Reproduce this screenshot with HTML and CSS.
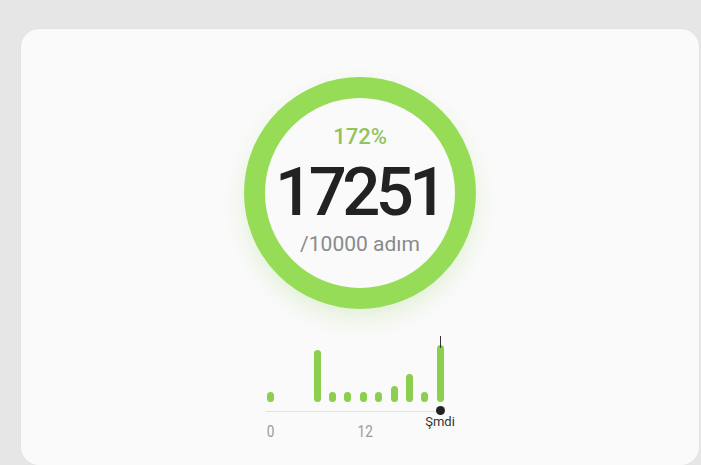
FILE: index.html
```html
<!DOCTYPE html>
<html lang="tr">
<head>
  <meta charset="UTF-8" />
  <meta name="viewport" content="width=device-width, initial-scale=1" />
  <title>Adım</title>
  <link rel="stylesheet" href="styles.css">
</head>
<body>
  <div class="card">
    <div class="ring">
      <div class="percent">172%</div>
      <div class="steps">17251</div>
      <div class="goal">/10000 adım</div>
    </div>

    <div class="chart">
      <div class="bars">
        <div class="slot"><div class="bar" style="height:10px"></div></div>
        <div class="slot"></div>
        <div class="slot"></div>
        <div class="slot"><div class="bar" style="height:52px"></div></div>
        <div class="slot"><div class="bar" style="height:10px"></div></div>
        <div class="slot"><div class="bar" style="height:10px"></div></div>
        <div class="slot"><div class="bar" style="height:10px"></div></div>
        <div class="slot"><div class="bar" style="height:10px"></div></div>
        <div class="slot"><div class="bar" style="height:16px"></div></div>
        <div class="slot"><div class="bar" style="height:28px"></div></div>
        <div class="slot"><div class="bar" style="height:10px"></div></div>
        <div class="slot now"><div class="bar" style="height:57px"></div></div>
      </div>
      <div class="axis">
        <span class="dot"></span>
        <span class="now-label">Şmdi</span>
      </div>
      <div class="labels">
        <span class="lbl first">0</span>
        <span class="lbl mid">12</span>
      </div>
    </div>
  </div>
</body>
</html>
```

FILE: styles.css
```css
body {
  margin: 0;
  padding: 29px 2px 0 21px;
  background: #e6e6e6;
  font-family: Roboto, "Noto Sans", sans-serif;
  height: 465px;
  box-sizing: border-box;
  overflow: hidden;
}

.card {
  background: #fafafa;
  border-radius: 18px;
  box-shadow: 0 0 2px rgba(0,0,0,0.06);
  height: 436px;
  padding-top: 48px;
  box-sizing: border-box;
  display: flex;
  flex-direction: column;
  align-items: center;
}

/* Halka */
.ring {
  width: 232px;
  height: 232px;
  box-sizing: border-box;
  border: 21px solid #97dc57;
  border-radius: 50%;
  box-shadow: 0 10px 22px rgba(130,200,70,0.18);
  display: flex;
  flex-direction: column;
  align-items: center;
  padding-top: 26px;
}

.percent {
  font-size: 22px;
  line-height: 26px;
  font-weight: 500;
  color: #92c35d;
}

.steps {
  margin-top: 12px;
  font-size: 67px;
  line-height: 60px;
  font-weight: 500;
  letter-spacing: -4.5px;
  color: #222;
  text-indent: -2px;
}

.goal {
  margin-top: 10px;
  font-size: 21px;
  line-height: 24px;
  color: #8a8a8a;
}

/* Grafik */
.chart {
  width: 200px;
  margin-top: 27px;
}

.bars {
  display: grid;
  grid-template-columns: repeat(12, 15.4px);
  padding-left: 3.3px;
  height: 66px;
  align-items: end;
}

.slot {
  display: flex;
  justify-content: center;
  align-items: flex-end;
  height: 66px;
  position: relative;
}

.bar {
  width: 7px;
  border-radius: 3.5px;
  background: #8ccf4e;
}

.slot.now::before {
  content: "";
  position: absolute;
  left: 50%;
  top: 0;
  width: 1px;
  height: 12px;
  background: #333;
}

.axis {
  position: relative;
  margin-top: 8.5px;
  margin-left: 6px;
  width: 174px;
  height: 1px;
  background: #e2e2e2;
}

.dot {
  position: absolute;
  right: -4.5px;
  top: -4.5px;
  width: 9px;
  height: 9px;
  border-radius: 50%;
  background: #222;
}

.now-label {
  position: absolute;
  left: 100%;
  top: 3.5px;
  transform: translateX(-50%);
  font-size: 13px;
  line-height: 15px;
  color: #333;
}

.labels {
  display: grid;
  grid-template-columns: repeat(12, 15.4px);
  padding-left: 3.3px;
  margin-top: 9.5px;
}

.lbl {
  font-size: 17px;
  line-height: 20px;
  font-weight: 400;
  color: #999;
  text-align: center;
  transform: scaleX(0.8);
}

.lbl.first { grid-column: 1; }
.lbl.mid { grid-column: 7; }
```
